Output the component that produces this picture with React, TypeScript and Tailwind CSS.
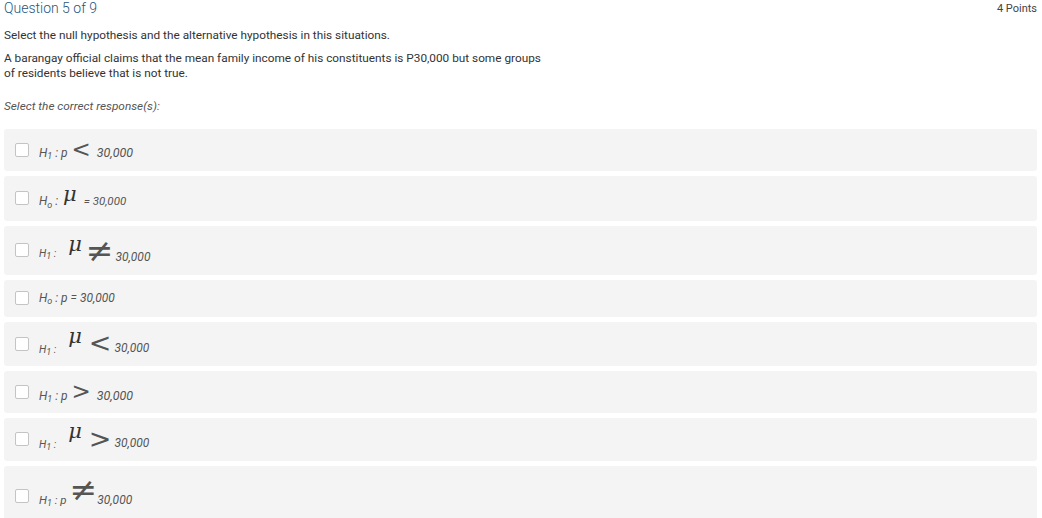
import React from "react";

// inline math pieces; vertical-align shifts them off the text baseline like a typeset formula
const mu = "inline-block font-['DejaVu_Serif','Liberation_Serif',serif] font-light text-[21px] leading-none text-[#333]";
const rel = "font-['DejaVu_Sans',sans-serif] font-extralight text-[23px] text-[#555]";
const relLg = "font-['DejaVu_Sans',sans-serif] font-extralight text-[27px] text-[#555]";
const neq = "font-['DejaVu_Sans',sans-serif] font-extralight text-[33px] text-[#555]";

const H = ({ n }: { n: string }) => (
  <>
    H<sub className="text-[9px]">{n}</sub>
  </>
);

const Box = () => <span className="w-[14px] h-[14px] bg-white border border-[#c4c4c4] rounded-[2px] shrink-0" />;

type Row = { h: string; c?: string; body: React.ReactNode };

const rows: Row[] = [
  {
    h: "h-[42px]",
    body: (
      <>
        <H n="1" /> : p <span className={`${rel} ml-[1px]`}>&lt;</span>{" "}
        <span className="text-[12.5px] ml-[3px]">30,000</span>
      </>
    ),
  },
  {
    h: "h-[45px]",
    c: "pb-[4px]",
    body: (
      <>
        <H n="o" /> : <span className={`${mu} align-[4px] ml-[2px]`}>𝜇</span>{" "}
        <span className="text-[11.5px] ml-[4px]">= 30,000</span>
      </>
    ),
  },
  {
    h: "h-[49px]",
    body: (
      <>
        <span className="text-[10.5px]">
          <H n="1" /> :
        </span>{" "}
        <span className={`${mu} align-[6px] ml-[9px]`}>𝜇</span>{" "}
        <span className={`${neq} align-[-5px] ml-[1px]`}>≠</span>{" "}
        <span className="text-[12px] align-[-4px] ml-[-1px]">30,000</span>
      </>
    ),
  },
  {
    h: "h-[37px]",
    body: (
      <>
        <H n="o" /> : p = 30,000
      </>
    ),
  },
  {
    h: "h-[44px]",
    c: "pb-[6px]",
    body: (
      <>
        <span className="text-[10.5px]">
          <H n="1" /> :
        </span>{" "}
        <span className={`${mu} align-[10px] ml-[9px]`}>𝜇</span>{" "}
        <span className={`${relLg} align-[1px] ml-[4px]`}>&lt;</span>{" "}
        <span className="text-[12px] align-[1px]">30,000</span>
      </>
    ),
  },
  {
    h: "h-[42px]",
    body: (
      <>
        <H n="1" /> : p <span className={`${rel} align-[1px] ml-[1px]`}>&gt;</span>{" "}
        <span className="text-[12.5px] ml-[3px]">30,000</span>
      </>
    ),
  },
  {
    h: "h-[43px]",
    c: "pb-[6px]",
    body: (
      <>
        <span className="text-[10.5px]">
          <H n="1" /> :
        </span>{" "}
        <span className={`${mu} align-[10px] ml-[9px]`}>𝜇</span>{" "}
        <span className={`${relLg} ml-[4px]`}>&gt;</span>{" "}
        <span className="text-[12px] align-[1px]">30,000</span>
      </>
    ),
  },
  {
    h: "h-[60px]",
    c: "pb-[12px]",
    body: (
      <>
        <span className="text-[11.5px]">
          <H n="1" /> : p
        </span>
        <span className={`${neq} align-[3px] ml-[3px]`}>≠</span>
        <span className="text-[12px]">30,000</span>
      </>
    ),
  },
];

export default function App() {
  return (
    <div className="w-[1042px] h-[518px] overflow-hidden bg-white font-['Roboto',sans-serif] text-[#333] pl-[4px] pr-[5px]">
      <div className="flex items-start justify-between">
        <h1 className="text-[14px] font-light leading-[17px] text-[#1f5580]">Question 5 of 9</h1>
        <span className="text-[11px] text-[#444] mt-[1px]">4 Points</span>
      </div>
      <p className="text-[11.8px] leading-[15px] mt-[10px]">
        Select the null hypothesis and the alternative hypothesis in this situations.
      </p>
      <p className="text-[11.8px] leading-[15px] mt-[8px] w-[545px]">
        A barangay official claims that the mean family income of his constituents is P30,000 but some groups of
        residents believe that is not true.
      </p>
      <p className="text-[11.8px] leading-[15px] italic text-[#555] mt-[18px]">Select the correct response(s):</p>
      <div className="flex flex-col gap-[5px] mt-[15px]">
        {rows.map((r, i) => (
          <div key={i} className={`${r.h} bg-[#f4f4f4] rounded-[3px] flex items-center gap-[10px] pl-[11px] shrink-0`}>
            <Box />
            <span className={`${r.c ?? ""} italic text-[12px] leading-none text-[#555] whitespace-pre`}>{r.body}</span>
          </div>
        ))}
      </div>
    </div>
  );
}
